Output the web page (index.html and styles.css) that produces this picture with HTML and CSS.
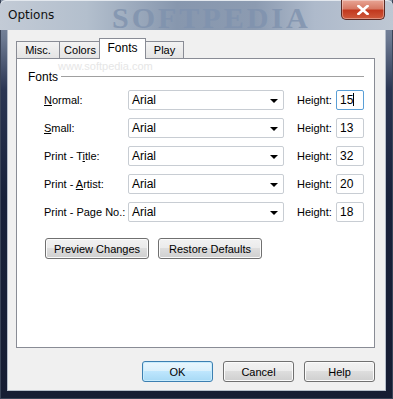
FILE: index.html
```html
<!DOCTYPE html>
<html lang="en">
<head>
    <meta charset="UTF-8">
    <title>Options</title>
    <link rel="stylesheet" href="styles.css">
</head>
<body>
    <div class="window">
        <div class="titlebar">
            <span class="caption">Options</span>
            <span class="watermark">SOFTPEDIA</span>
            <button class="close-btn">
                <svg width="12" height="10" viewBox="0 0 12 10">
                    <path d="M1.5 1 L10.5 9 M10.5 1 L1.5 9" stroke="#fff" stroke-width="2.6" stroke-linecap="square"/>
                </svg>
            </button>
        </div>
        <div class="client">
            <div class="tabs">
                <div class="tab misc">Misc.</div>
                <div class="tab colors">Colors</div>
                <div class="tab active">Fonts</div>
                <div class="tab play">Play</div>
            </div>
            <div class="panel">
                <span class="site-mark">www.softpedia.com</span>
                <div class="group-head">
                    <span>Fonts</span>
                    <div class="group-line"></div>
                </div>
                <div class="font-rows">
                    <div class="label"><u>N</u>ormal:</div>
                    <div class="combo">Arial<span class="arrow"></span></div>
                    <div class="hlabel">Height:</div>
                    <div class="num focused">15<span class="caret"></span></div>

                    <div class="label"><u>S</u>mall:</div>
                    <div class="combo">Arial<span class="arrow"></span></div>
                    <div class="hlabel">Height:</div>
                    <div class="num">13</div>

                    <div class="label">Print - T<u>i</u>tle:</div>
                    <div class="combo">Arial<span class="arrow"></span></div>
                    <div class="hlabel">Height:</div>
                    <div class="num">32</div>

                    <div class="label">Print - <u>A</u>rtist:</div>
                    <div class="combo">Arial<span class="arrow"></span></div>
                    <div class="hlabel">Height:</div>
                    <div class="num">20</div>

                    <div class="label">Print - Page No.:</div>
                    <div class="combo">Arial<span class="arrow"></span></div>
                    <div class="hlabel">Height:</div>
                    <div class="num">18</div>
                </div>
                <div class="panel-buttons">
                    <button class="btn wide">Preview Changes</button>
                    <button class="btn wide">Restore Defaults</button>
                </div>
            </div>
            <div class="dialog-buttons">
                <button class="btn default">OK</button>
                <button class="btn">Cancel</button>
                <button class="btn">Help</button>
            </div>
        </div>
    </div>
</body>
</html>
```

FILE: styles.css
```css
body {
    margin: 0;
    overflow: hidden;
    font-family: 'Liberation Sans', Arial, sans-serif;
    font-size: 11px;
    color: #000;
}

.window {
    width: 393px;
    height: 399px;
    box-sizing: border-box;
    display: flex;
    flex-direction: column;
    padding: 0 8px 9px 8px;
    background: linear-gradient(to bottom, #8d99ab 0px, #6b7890 40px, #2a3552 90px, #18213a 200px, #161d33 100%);
    box-shadow: inset 1px 0 0 #3a4458, inset -1px 0 0 #3a4458, inset 0 -1px 0 #3a4458;
}

.titlebar {
    height: 30px;
    margin: 0 -8px;
    position: relative;
    display: flex;
    align-items: center;
    padding-left: 8px;
    background: linear-gradient(to right, #c3cbd6 0%, #b3bfcd 22%, #8797ae 45%, #8c9bb1 65%, #aebacb 80%, #bec7d3 100%);
    border-radius: 6px 6px 0 0;
    box-shadow: inset 0 1px 0 #e3e8ee;
}

.caption {
    font-family: 'DejaVu Sans', sans-serif;
    font-size: 12px;
    color: #111;
    position: relative;
    z-index: 1;
}

.watermark {
    position: absolute;
    left: 112px;
    top: 1px;
    font-family: 'Liberation Serif', serif;
    font-weight: bold;
    font-size: 30px;
    letter-spacing: 3px;
    color: #7f92ae;
    opacity: 0.8;
}

.close-btn {
    position: absolute;
    right: 8px;
    top: 0;
    width: 44px;
    height: 20px;
    border: 1px solid #5a2a24;
    border-top: none;
    border-radius: 0 0 5px 5px;
    background: linear-gradient(to bottom, #e8a595 0%, #d77a65 45%, #c2391f 55%, #cf5a3c 100%);
    display: flex;
    align-items: center;
    justify-content: center;
    padding: 0;
    box-shadow: inset 0 0 0 1px rgba(255, 255, 255, 0.35);
}

.client {
    flex: 1;
    background: #f0f0f0;
    box-shadow: 0 0 0 1px #b5bdc9;
    display: flex;
    flex-direction: column;
    padding: 8px 10px 0 8px;
}

.tabs {
    display: flex;
    align-items: flex-end;
    height: 20px;
    position: relative;
    z-index: 1;
}

.tab {
    height: 17px;
    box-sizing: border-box;
    border: 1px solid #898c95;
    border-bottom: none;
    margin-right: -1px;
    text-align: center;
    line-height: 17px;
    background: linear-gradient(to bottom, #f3f3f3, #e4e4e4);
}

.tab.misc {
    width: 44px;
}

.tab.colors {
    width: 42px;
}

.tab.play {
    width: 39px;
}

.tab.active {
    width: 47px;
    height: 21px;
    background: #fff;
    margin: 0 -1px -1px -1px;
    line-height: 18px;
    font-size: 12px;
    position: relative;
    z-index: 2;
}

.panel {
    height: 290px;
    box-sizing: border-box;
    background: #fff;
    border: 1px solid #898c95;
    padding: 11px 10px 0 11px;
    position: relative;
}

.site-mark {
    position: absolute;
    left: 41px;
    top: 1px;
    font-size: 11px;
    color: #e6e6e6;
}

.group-head {
    display: flex;
    align-items: center;
    gap: 3px;
    height: 14px;
    font-size: 12px;
}

.group-line {
    flex: 1;
    height: 1px;
    margin-top: -2px;
    background: #a0a0a0;
}

.font-rows {
    display: grid;
    grid-template-columns: 84px 156px 52px 28px;
    row-gap: 8px;
    margin: 6px 0 0 16px;
    font-size: 12px;
}

.label {
    align-self: center;
    white-space: nowrap;
    font-size: 11px;
}

.hlabel {
    margin-left: 13px;
    align-self: center;
    font-size: 11px;
}

.combo,
.num {
    height: 20px;
    box-sizing: border-box;
    border: 1px solid #c8cdd3;
    border-radius: 2px;
    line-height: 18px;
    padding-left: 3px;
    position: relative;
    background: #fff;
}

.num.focused {
    border-color: #5a9fd6;
}

.caret {
    display: inline-block;
    width: 1px;
    height: 13px;
    background: #000;
    vertical-align: -2px;
}

.arrow {
    position: absolute;
    right: 5px;
    top: 8px;
    width: 0;
    height: 0;
    border-left: 4px solid transparent;
    border-right: 4px solid transparent;
    border-top: 4px solid #000;
}

.panel-buttons {
    display: flex;
    gap: 9px;
    margin: 16px 0 0 17px;
}

.btn {
    font-family: 'Liberation Sans', Arial, sans-serif;
    font-size: 11px;
    height: 21px;
    padding: 0;
    border: 1px solid #707070;
    border-radius: 3px;
    background: linear-gradient(to bottom, #f2f2f2 0%, #ebebeb 49%, #dddddd 50%, #cfcfcf 100%);
    box-shadow: inset 0 0 0 1px #fbfbfb;
    color: #000;
}

.btn.wide {
    width: 104px;
}

.dialog-buttons {
    display: flex;
    justify-content: flex-end;
    gap: 10px;
    margin-top: 13px;
}

.dialog-buttons .btn {
    width: 71px;
}

.btn.default {
    border-color: #3c7fb1;
    background: linear-gradient(to bottom, #eaf6fd 0%, #d9f0fc 49%, #bee6fd 50%, #a7d9f5 100%);
    box-shadow: inset 0 0 0 1px #c8ecfd;
}
```
